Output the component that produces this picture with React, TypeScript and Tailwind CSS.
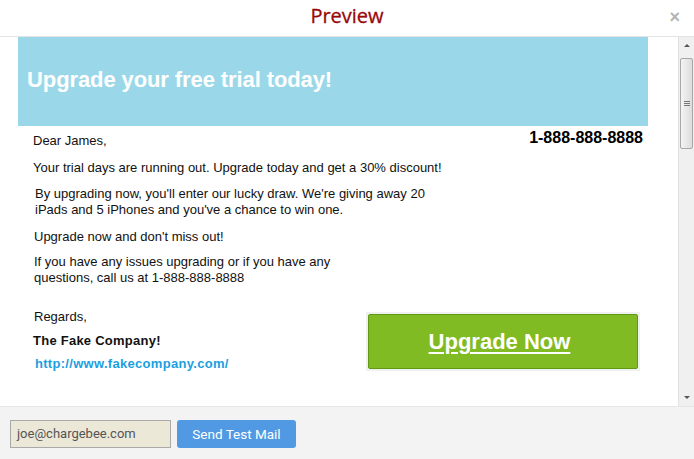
import React from 'react'

const arial = { fontFamily: '"Liberation Sans", Arial, sans-serif' }

function Scrollbar() {
  return (
    <div className="w-[16px] flex flex-col bg-[#f0f0f0] border-l border-[#e2e2e2]">
      <div className="h-[17px] flex items-center justify-center">
        <div className="w-0 h-0 border-l-[3px] border-r-[3px] border-b-[3px] border-l-transparent border-r-transparent border-b-[#555]" />
      </div>
      <div className="mx-[1px] mt-[4px] h-[91px] rounded-[2px] border border-[#a8a8a8] bg-gradient-to-r from-[#f4f4f4] to-[#dcdcdc] flex items-center justify-center">
        <div className="flex flex-col gap-[1px]">
          <div className="w-[6px] h-[1px] bg-[#777]" />
          <div className="w-[6px] h-[1px] bg-[#777]" />
          <div className="w-[6px] h-[1px] bg-[#777]" />
        </div>
      </div>
      <div className="flex-1" />
      <div className="h-[17px] flex items-center justify-center">
        <div className="w-0 h-0 border-l-[3px] border-r-[3px] border-t-[3px] border-l-transparent border-r-transparent border-t-[#555]" />
      </div>
    </div>
  )
}

export default function App() {
  return (
    <div className="w-[694px] h-[459px] bg-white flex flex-col overflow-hidden">
      <div className="h-[37px] flex items-center justify-center relative border-b border-[#e4e4e4]">
        <span
          className="text-[20px] text-[#990808] leading-none -mt-[4px] [-webkit-text-stroke:0.3px_#990808]"
          style={{ fontFamily: '"Open Sans", sans-serif' }}
        >
          Preview
        </span>
        <span className="absolute right-[14px] top-[4px] text-[18px] font-bold text-[#b3b3b3]" style={arial}>
          ×
        </span>
      </div>

      <div className="flex h-[369px]">
        <div className="flex-1 pl-[18px] pr-[30px] text-[13px] leading-[16px] text-[#111]" style={arial}>
          <div className="h-[89px] bg-[#9ad8e9] flex items-center pl-[9px] pb-[4px]">
            <span className="text-white font-bold text-[22px] tracking-[-0.1px]">Upgrade your free trial today!</span>
          </div>

          <div className="flex justify-between pl-[15px] pr-[5px]">
            <div className="mt-[7px]">Dear James,</div>
            <div className="mt-[3px] text-[16px] leading-[18px] font-bold text-black">1-888-888-8888</div>
          </div>
          <div className="pl-[15px] mt-[11px]">Your trial days are running out. Upgrade today and get a 30% discount!</div>
          <div className="pl-[17px] mt-[10px]">
            By upgrading now, you'll enter our lucky draw. We're giving away 20
            <br />
            iPads and 5 iPhones and you've a chance to win one.
          </div>
          <div className="pl-[16px] mt-[11px]">Upgrade now and don't miss out!</div>
          <div className="pl-[16px] mt-[9px]">
            If you have any issues upgrading or if you have any
            <br />
            questions, call us at 1-888-888-8888
          </div>

          <div className="flex justify-between pr-[8px]">
            <div className="pl-[15px]">
              <div className="mt-[23px] pl-[1px]">Regards,</div>
              <div className="mt-[8px] font-bold tracking-[0.25px]">The Fake Company!</div>
              <div className="mt-[7px] pl-[2px] font-bold tracking-[0.3px] text-[#1b9fe0]">http://www.fakecompany.com/</div>
            </div>
            <div className="mt-[26px] p-[2px] bg-[#f0f0f0] h-[59px]">
              <div className="w-[270px] h-[55px] bg-[#80bb23] border border-[#5f9a12] rounded-[2px] flex items-center justify-center pr-[7px] pt-[1px]">
                <span className="text-white font-bold text-[22px] underline underline-offset-[3px] decoration-[2px]">Upgrade Now</span>
              </div>
            </div>
          </div>
        </div>
        <Scrollbar />
      </div>

      <div className="flex-1 bg-[#f3f3f3] border-t border-[#e6e6e6] flex items-start gap-[6px] pl-[10px] pt-[13px]">
        <div
          className="w-[161px] h-[28px] bg-[#ece8d8] border border-[#a9a9a9] flex items-center pl-[6px] text-[13px] text-[#555]"
          style={{ fontFamily: 'Roboto, sans-serif' }}
        >
          joe@chargebee.com
        </div>
        <div
          className="w-[119px] h-[28px] bg-[#519ae3] rounded-[3px] flex items-center justify-center text-[13.5px] text-white"
          style={{ fontFamily: 'Roboto, sans-serif' }}
        >
          Send Test Mail
        </div>
      </div>
    </div>
  )
}
